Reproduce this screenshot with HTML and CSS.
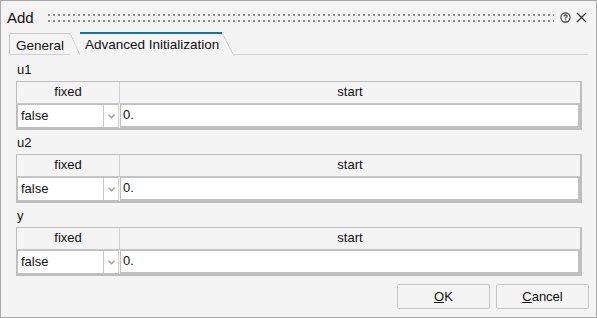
FILE: index.html
```html
<!DOCTYPE html>
<html>
<head>
<meta charset="utf-8">
<link rel="stylesheet" href="styles.css">
</head>
<body>
<div class="window">
  <div class="titlebar">
    <span class="title">Add</span>
    <span class="grip"></span>
    <svg class="help" width="11" height="11" viewBox="0 0 11 11"><circle cx="5.5" cy="5.5" r="4.6" fill="none" stroke="#333" stroke-width="1.1"/><path d="M3.9 4.4 C3.9 3.3 4.6 2.9 5.5 2.9 C6.4 2.9 7.1 3.4 7.1 4.2 C7.1 5.1 5.6 5.2 5.6 6.4" fill="none" stroke="#333" stroke-width="1.1"/><rect x="5.05" y="7.3" width="1.1" height="1.1" fill="#333"/></svg>
    <svg class="close" width="11" height="11" viewBox="0 0 11 11"><path d="M1 1 L10 10 M10 1 L1 10" stroke="#333" stroke-width="1.2"/></svg>
  </div>
  <div class="tabs">
    <div class="tab">General</div>
    <div class="tab active">Advanced Initialization</div>
    <div class="tabline"></div>
  </div>
  <div class="content">
    <div class="section">
      <div class="label">u1</div>
      <div class="grid">
        <div class="hcell fixed">fixed</div>
        <div class="hcell start">start</div>
        <div class="select"><span class="val">false</span><span class="arrow"><svg width="7" height="5" viewBox="0 0 7 5"><path d="M0.5 0.8 L3.5 3.8 L6.5 0.8" fill="none" stroke="#999" stroke-width="1.3"/></svg></span></div>
        <div class="input">0.</div>
      </div>
    </div>
    <div class="section">
      <div class="label">u2</div>
      <div class="grid">
        <div class="hcell fixed">fixed</div>
        <div class="hcell start">start</div>
        <div class="select"><span class="val">false</span><span class="arrow"><svg width="7" height="5" viewBox="0 0 7 5"><path d="M0.5 0.8 L3.5 3.8 L6.5 0.8" fill="none" stroke="#999" stroke-width="1.3"/></svg></span></div>
        <div class="input">0.</div>
      </div>
    </div>
    <div class="section">
      <div class="label">y</div>
      <div class="grid">
        <div class="hcell fixed">fixed</div>
        <div class="hcell start">start</div>
        <div class="select"><span class="val">false</span><span class="arrow"><svg width="7" height="5" viewBox="0 0 7 5"><path d="M0.5 0.8 L3.5 3.8 L6.5 0.8" fill="none" stroke="#999" stroke-width="1.3"/></svg></span></div>
        <div class="input">0.</div>
      </div>
    </div>
  </div>
  <div class="buttons">
    <button class="btn"><u>O</u>K</button>
    <button class="btn"><u>C</u>ancel</button>
  </div>
</div>
</body>
</html>
```
FILE: styles.css
```css
* { box-sizing: border-box; }
html, body { margin: 0; padding: 0; }
body {
  font-family: "Liberation Sans", Arial, sans-serif;
  font-size: 13px;
  color: #111;
  background: #f4f4f4;
}
.window {
  width: 597px;
  height: 318px;
  border: 1px solid #a9a9a9;
  background: #f4f4f4;
  display: flex;
  flex-direction: column;
}
.titlebar {
  height: 30px;
  display: flex;
  align-items: center;
  padding: 2px 9px 0 6px;
}
.title {
  font-size: 15px;
  color: #111;
  width: 41px;
}
.grip {
  flex: 1;
  height: 8px;
  margin-right: 6px;
  margin-top: 1px;
  background-image: conic-gradient(at 2px 2px, transparent 75%, #8f8f8f 0);
  background-size: 5px 6px;
}
.help { margin-right: 5px; }
.tabs {
  height: 24px;
  display: flex;
  align-items: flex-end;
  padding-left: 8px;
  white-space: nowrap;
}
.tab {
  position: relative;
  height: 22px;
  padding: 3px 6px 0 6px;
  border-top: 1px solid #c8c8c8;
  border-left: 1px solid #c8c8c8;
  border-bottom: 1px solid #d0d0d0;
  font-size: 13.5px;
  line-height: 17px;
  margin-right: 10px;
}
.tab::after {
  content: "";
  position: absolute;
  top: -1px;
  right: -10px;
  width: 10px;
  height: 22px;
  background: linear-gradient(to top right, transparent calc(50% - 0.7px), #c8c8c8 50%, transparent calc(50% + 0.7px));
}
.tab.active {
  border-left: none;
  border-bottom: none;
  border-top: 2px solid #0f76a7;
  height: 23px;
  padding: 2px 3px 0 5px;
  margin-right: 12px;
}
.tab.active::after {
  top: -1px;
  right: -12px;
  width: 12px;
  height: 23px;
}
.tabline {
  flex: 1;
  border-bottom: 1px solid #d4d4d4;
  margin-right: 8px;
}
.content {
  flex: 1;
  padding: 7px 15px 0 15px;
}
.section { margin-bottom: 5px; }
.label {
  font-size: 13px;
  height: 19px;
  line-height: 15px;
  padding-left: 1px;
}
.grid {
  display: grid;
  grid-template-columns: 103px 1fr;
  grid-template-rows: 22px 24px;
  border: 1px solid #bdbdbd;
  border-bottom-width: 2px;
  border-right-width: 2px;
  width: 566px;
  background: #f4f4f4;
}
.hcell {
  text-align: center;
  font-size: 13px;
  line-height: 20px;
  border-bottom: 1px solid #c6c6c6;
  border-right: 1px solid #d2d2d2;
}
.hcell.start { border-right: none; }
.select {
  display: flex;
  background: #fff;
  border: 1px solid #c0c0c0;
  border-right: 1px solid #d2d2d2;
  margin-right: 1px;
}
.val {
  flex: 1;
  padding-left: 3px;
  line-height: 21px;
  font-size: 13px;
  border-right: 1px solid #c8c8c8;
}
.arrow {
  width: 14px;
  display: flex;
  align-items: center;
  justify-content: center;
}
.input {
  background: #fff;
  border: 1px solid #c0c0c0;
  border-right: 2px solid #c0c0c0;
  border-bottom: 2px solid #c0c0c0;
  padding-left: 2px;
  line-height: 20px;
  font-size: 13px;
}
.buttons {
  display: flex;
  justify-content: flex-end;
  gap: 6px;
  padding: 0 7px 8px 0;
}
.btn {
  width: 93px;
  height: 25px;
  font-family: "Liberation Sans", Arial, sans-serif;
  font-size: 13px;
  color: #111;
  background: #f4f4f4;
  border: 1px solid #c6c6c6;
  border-radius: 2px;
  padding: 0;
}
```
